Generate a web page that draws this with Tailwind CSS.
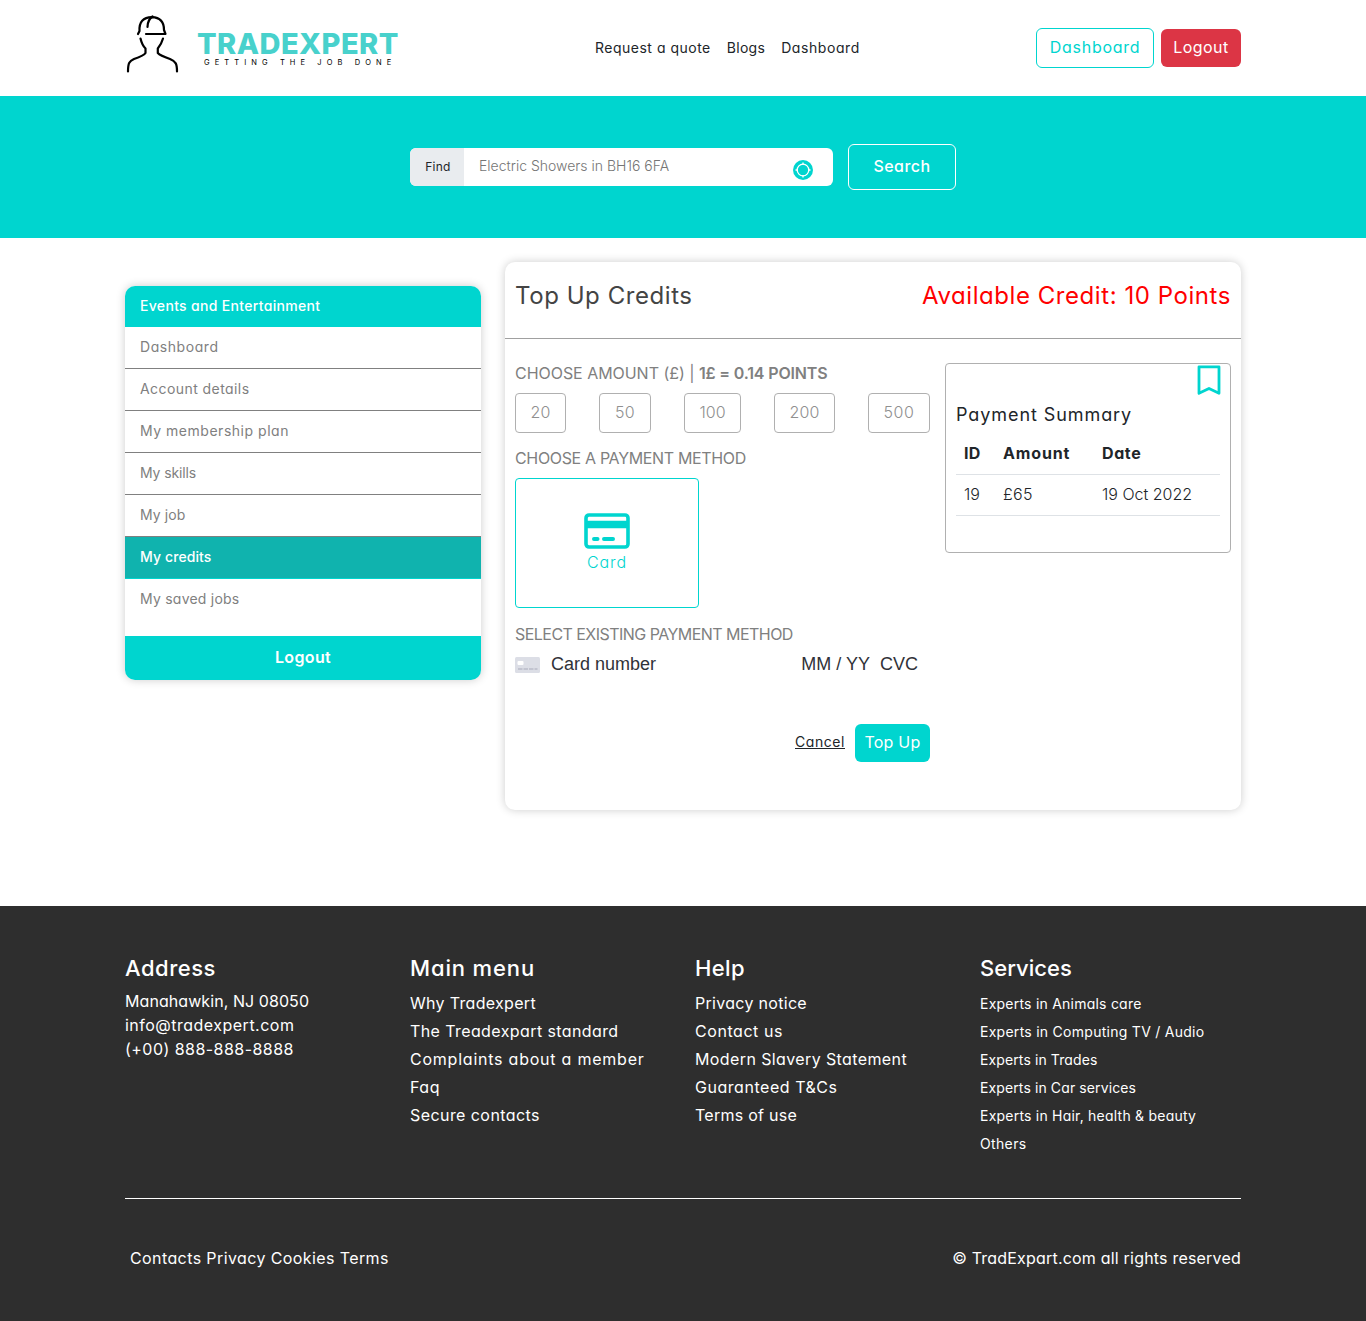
<!DOCTYPE html>
<html lang="en">
<head>
<meta charset="utf-8">
<title>Tradexpert</title>
<script src="https://cdn.jsdelivr.net/npm/@tailwindcss/browser@4"></script>
</head>
<body class="bg-white font-[Inter,'Open_Sans',sans-serif] [font-feature-settings:'cv11'] text-base text-[#212529] overflow-x-hidden">
<header class="h-24">
  <div class="mx-auto flex h-full w-[1116px] items-center justify-between">
    <a class="flex h-full w-[470px] items-start">
      <svg class="mt-3 h-16 w-[60px]" viewBox="125 12 60 64" fill="none" stroke="#000" stroke-width="2.200" stroke-linecap="round" stroke-linejoin="round">
        <path d="M138 34 L139.500 31 C139 22 143 17.500 152 17.200 C160 17.500 164 22 164 30 L165.500 34 H146"/>
        <path d="M152.500 16.500 Q147.500 20 147.500 27"/>
        <path d="M140.500 38.500 Q142 45 145.500 48.500 V53 Q144 55.500 134 59 C129.500 61 128 63 128 71.500"/>
        <path d="M163 38.500 Q161.500 44 157.800 48.500 V53 Q160 55.500 170 59 C176 61.500 177 64 177 71.500"/>
      </svg>
      <span class="ml-3 mt-[29px] flex w-[201px] flex-col">
        <b class="self-start whitespace-nowrap text-[29px] leading-[29px] font-extrabold tracking-[0.45px] text-[#48d1cc]">TRADEXPERT</b>
        <span class="mt-px ml-[7px] self-start whitespace-nowrap text-[7.500px] leading-[8px] tracking-[5.090px] text-black">GETTING THE JOB DONE</span>
      </span>
    </a>
    <nav class="flex flex-1 gap-4 text-sm">
      <a class="tracking-[0.5px]">Request a quote</a><a class="tracking-[0.3px]">Blogs</a><a class="tracking-[0.58px]">Dashboard</a>
    </nav>
    <div class="flex items-center gap-[7px]">
      <a class="flex h-10 w-[118px] items-center justify-center rounded-md border border-[#00d5cf] pb-0.5 text-[#00d5cf]"><span class="tracking-[0.72px]">Dashboard</span></a>
      <a class="flex h-[38px] w-20 items-center justify-center rounded-md bg-[#dc3545] pb-0.5 text-white"><span class="tracking-[0.46px]">Logout</span></a>
    </div>
  </div>
</header>
<section class="flex h-[142px] items-center justify-center gap-[15px] bg-[#00d5cf]">
  <div class="flex h-[38px] w-[423px] overflow-hidden rounded-md bg-white">
    <span class="flex w-[54px] items-center justify-center bg-[#e9ecef] pl-0.5 text-xs"><span class="tracking-[0.27px]">Find</span></span>
    <span class="flex flex-1 items-center pl-[15px] pr-5 pb-0.5 text-sm font-light text-[#757575]"><span class="mr-auto">Electric Showers in BH16 6FA</span>
      <svg class="mt-[7px] size-5" viewBox="0 0 20 20"><circle cx="10" cy="10" r="10" fill="#00d5cf"/><circle cx="10" cy="10" r="5.800" fill="none" stroke="#fff" stroke-width="1.300"/><path d="M10 2.500v2.500M10 15v2.500M2.500 10h2.500M15 10h2.500" stroke="#fff" stroke-width="1.300"/></svg></span>
  </div>
  <a class="flex h-[46px] w-[108px] items-center justify-center rounded-md border border-white pb-0.5 font-medium text-white"><span class="tracking-[0.44px]">Search</span></a>
</section>
<main class="mx-auto flex h-[668px] w-[1116px] items-start gap-6 pt-6">
  <aside class="mt-6 h-[394px] w-[356px] overflow-hidden rounded-[10px] text-sm text-[#808080] shadow-[0_0_10px_rgba(0,0,0,0.2)]">
    <div class="flex h-[41px] items-center bg-[#00d5cf] px-[15px] pb-px font-medium text-white"><span class="tracking-[0.32px]">Events and Entertainment</span></div>
    <div class="flex h-[42px] items-center border-b border-[#808080] px-[15px] pb-0.5"><span class="tracking-[0.56px]">Dashboard</span></div>
    <div class="flex h-[42px] items-center border-b border-[#808080] px-[15px] pb-0.5"><span class="tracking-[0.43px]">Account details</span></div>
    <div class="flex h-[42px] items-center border-b border-[#808080] px-[15px] pb-0.5"><span class="tracking-[0.52px]">My membership plan</span></div>
    <div class="flex h-[42px] items-center border-b border-[#808080] px-[15px] pb-0.5"><span class="tracking-[-0.13px]">My skills</span></div>
    <div class="flex h-[42px] items-center border-b border-[#808080] px-[15px] pb-0.5"><span class="tracking-[0.1px]">My job</span></div>
    <div class="flex h-[42px] items-center border-b border-[#00d5cf] bg-[#10b3ae] px-[15px] pb-0.5 font-medium text-white"><span class="tracking-[0.1px]">My credits</span></div>
    <div class="flex h-[57px] items-start px-[15px] pt-2.5"><span class="tracking-[0.23px]">My saved jobs</span></div>
    <div class="flex h-11 items-center justify-center bg-[#00d5cf] pb-0.5 text-base font-semibold text-white"><span class="tracking-[0.34px]">Logout</span></div>
  </aside>
  <section class="h-[548px] w-[736px] rounded-[10px] shadow-[0_0_10px_rgba(0,0,0,0.2)]">
    <div class="flex h-[77px] justify-between border-b border-[#a0a0a0] px-2.5 pt-4 text-2xl leading-9">
      <h1 class="tracking-[0.56px] text-[#444]">Top Up Credits</h1><span class="tracking-[0.56px] text-[#f00]">Available Credit: 10 Points</span>
    </div>
    <div class="flex justify-between px-2.5 pt-6">
      <div class="flex w-[415px] flex-col text-[#808080]">
        <p class="h-[30px] leading-[21px]"><span class="tracking-[-0.04px]">CHOOSE AMOUNT (£) | </span><b class="font-semibold tracking-[-0.16px]">1£ = 0.14 POINTS</b></p>
        <div class="flex justify-between font-light text-[#909090]">
          <span class="flex h-10 w-[51px] items-center justify-center rounded border border-[#b0b0b0] pb-0.5 tracking-[0.15px]">20</span>
          <span class="flex h-10 w-[52px] items-center justify-center rounded border border-[#b0b0b0] pb-0.5 tracking-[0.31px]">50</span>
          <span class="flex h-10 w-[57px] items-center justify-center rounded border border-[#b0b0b0] pb-0.5">100</span>
          <span class="flex h-10 w-[61px] items-center justify-center rounded border border-[#b0b0b0] pb-0.5 tracking-[0.14px]">200</span>
          <span class="flex h-10 w-[62px] items-center justify-center rounded border border-[#b0b0b0] pb-0.5 tracking-[0.5px]">500</span>
        </div>
        <p class="h-[45px] pt-[15px] leading-[21px] tracking-[-0.34px]">CHOOSE A PAYMENT METHOD</p>
        <div class="flex h-[130px] w-[184px] flex-col items-center rounded border border-[#00d5cf] pt-[34px] text-[#00d5cf]">
          <svg class="h-9 w-[46px]" viewBox="0 0 46 36" fill="none" stroke="#00d5cf"><rect x="2" y="2" width="42" height="32" rx="3" stroke-width="3.600"/><path d="M2 11.500h42" stroke-width="7.500"/><path d="M10 26h3.500M20 26h9" stroke-width="4" stroke-linecap="round"/></svg>
          <span class="mt-px font-light tracking-[0.9px]">Card</span>
        </div>
        <p class="h-[45px] pt-4 leading-[21px] tracking-[-0.54px]">SELECT EXISTING PAYMENT METHOD</p>
        <div class="flex h-[22px] items-center font-['Liberation_Sans',Arial,sans-serif] text-lg text-[#303238]">
          <svg class="mt-0.5 h-4 w-[25px]" viewBox="0 0 25 16"><rect width="25" height="16" rx="1.500" fill="#dcdee6"/><rect x="2.500" y="4" width="6" height="4" rx="1" fill="#fff"/><path d="M3 12h4.500M8.500 12h4.500M14 12h4.500M19.500 12h3" stroke="#b9bcc9" stroke-width="1.500"/></svg>
          <span class="ml-[11px] mr-auto">Card number</span><span class="mr-2.5">MM / YY</span><span class="mr-3">CVC</span>
        </div>
        <div class="mt-[49px] flex items-center justify-end gap-2.5">
          <a class="pb-0.5 text-sm tracking-[0.56px] text-[#212529] underline">Cancel</a>
          <a class="flex h-[38px] w-[75px] items-center justify-center rounded-md bg-[#00d5cf] pb-0.5 tracking-[0.22px] text-white">Top Up</a>
        </div>
      </div>
      <div class="h-[190px] w-[286px] rounded border border-[#b0b0b0] px-2.5">
        <svg class="-mr-px ml-auto mt-px block h-[30px] w-6" viewBox="0 0 24 30" fill="none" stroke="#00d5cf" stroke-width="2.800" stroke-linejoin="round"><path d="M2 1.800h20v26.500L12 23.500 2 28.300z"/></svg>
        <h2 class="mt-[7px] h-[31px] text-lg leading-[26px] tracking-[0.92px]">Payment Summary</h2>
        <div class="grid h-[42px] grid-cols-[39px_99px_1fr] border-b border-[#dee2e6] px-2 font-bold leading-10"><span class="tracking-[0.3px]">ID</span><span class="tracking-[0.85px]">Amount</span><span class="tracking-[0.6px]">Date</span></div>
        <div class="grid h-[41px] grid-cols-[39px_99px_1fr] border-b border-[#dee2e6] px-2 font-light leading-[38px]"><span>19</span><span class="tracking-[0.39px]">£65</span><span>19 Oct 2022</span></div>
      </div>
    </div>
  </section>
</main>
<footer class="h-[415px] bg-[#2e2e2e] text-white">
  <div class="mx-auto w-[1116px] pt-12">
    <div class="grid h-[245px] grid-cols-[285px_285px_285px_261px] border-b border-white whitespace-nowrap">
      <div><h3 class="mb-[7px] text-[22px] leading-7 font-medium tracking-[0.52px]">Address</h3>
        <p class="tracking-[0.07px]">Manahawkin, NJ 08050</p><p class="tracking-[0.49px]">info@tradexpert.com</p><p class="tracking-[0.46px]">(+00) 888-888-8888</p></div>
      <div class="leading-7"><h3 class="mb-[7px] text-[22px] leading-7 font-medium tracking-[0.86px]">Main menu</h3>
        <p class="tracking-[0.31px]">Why Tradexpert</p><p class="tracking-[0.4px]">The Treadexpart standard</p><p class="tracking-[0.77px]">Complaints about a member</p><p class="tracking-[0.53px]">Faq</p><p class="tracking-[0.43px]">Secure contacts</p></div>
      <div class="leading-7"><h3 class="mb-[7px] text-[22px] leading-7 font-medium tracking-[0.39px]">Help</h3>
        <p class="tracking-[0.3px]">Privacy notice</p><p class="tracking-[0.56px]">Contact us</p><p class="tracking-[0.39px]">Modern Slavery Statement</p><p class="tracking-[0.54px]">Guaranteed T&amp;Cs</p><p class="tracking-[0.26px]">Terms of use</p></div>
      <div class="text-sm leading-7"><h3 class="mb-2 text-[22px] leading-7 font-medium tracking-[0.04px]">Services</h3>
        <p class="tracking-[0.23px]">Experts in Animals care</p><p class="tracking-[0.27px]">Experts in Computing TV / Audio</p><p class="tracking-[0.11px]">Experts in Trades</p><p class="tracking-[0.11px]">Experts in Car services</p><p class="tracking-[0.22px]">Experts in Hair, health &amp; beauty</p><p class="tracking-[0.35px]">Others</p></div>
    </div>
    <div class="flex justify-between pl-[5px] pt-[47px]"><span class="tracking-[0.4px]">Contacts Privacy Cookies Terms</span><span class="tracking-[0.2px]">© TradExpart.com all rights reserved</span></div>
  </div>
</footer>
</body>
</html>
